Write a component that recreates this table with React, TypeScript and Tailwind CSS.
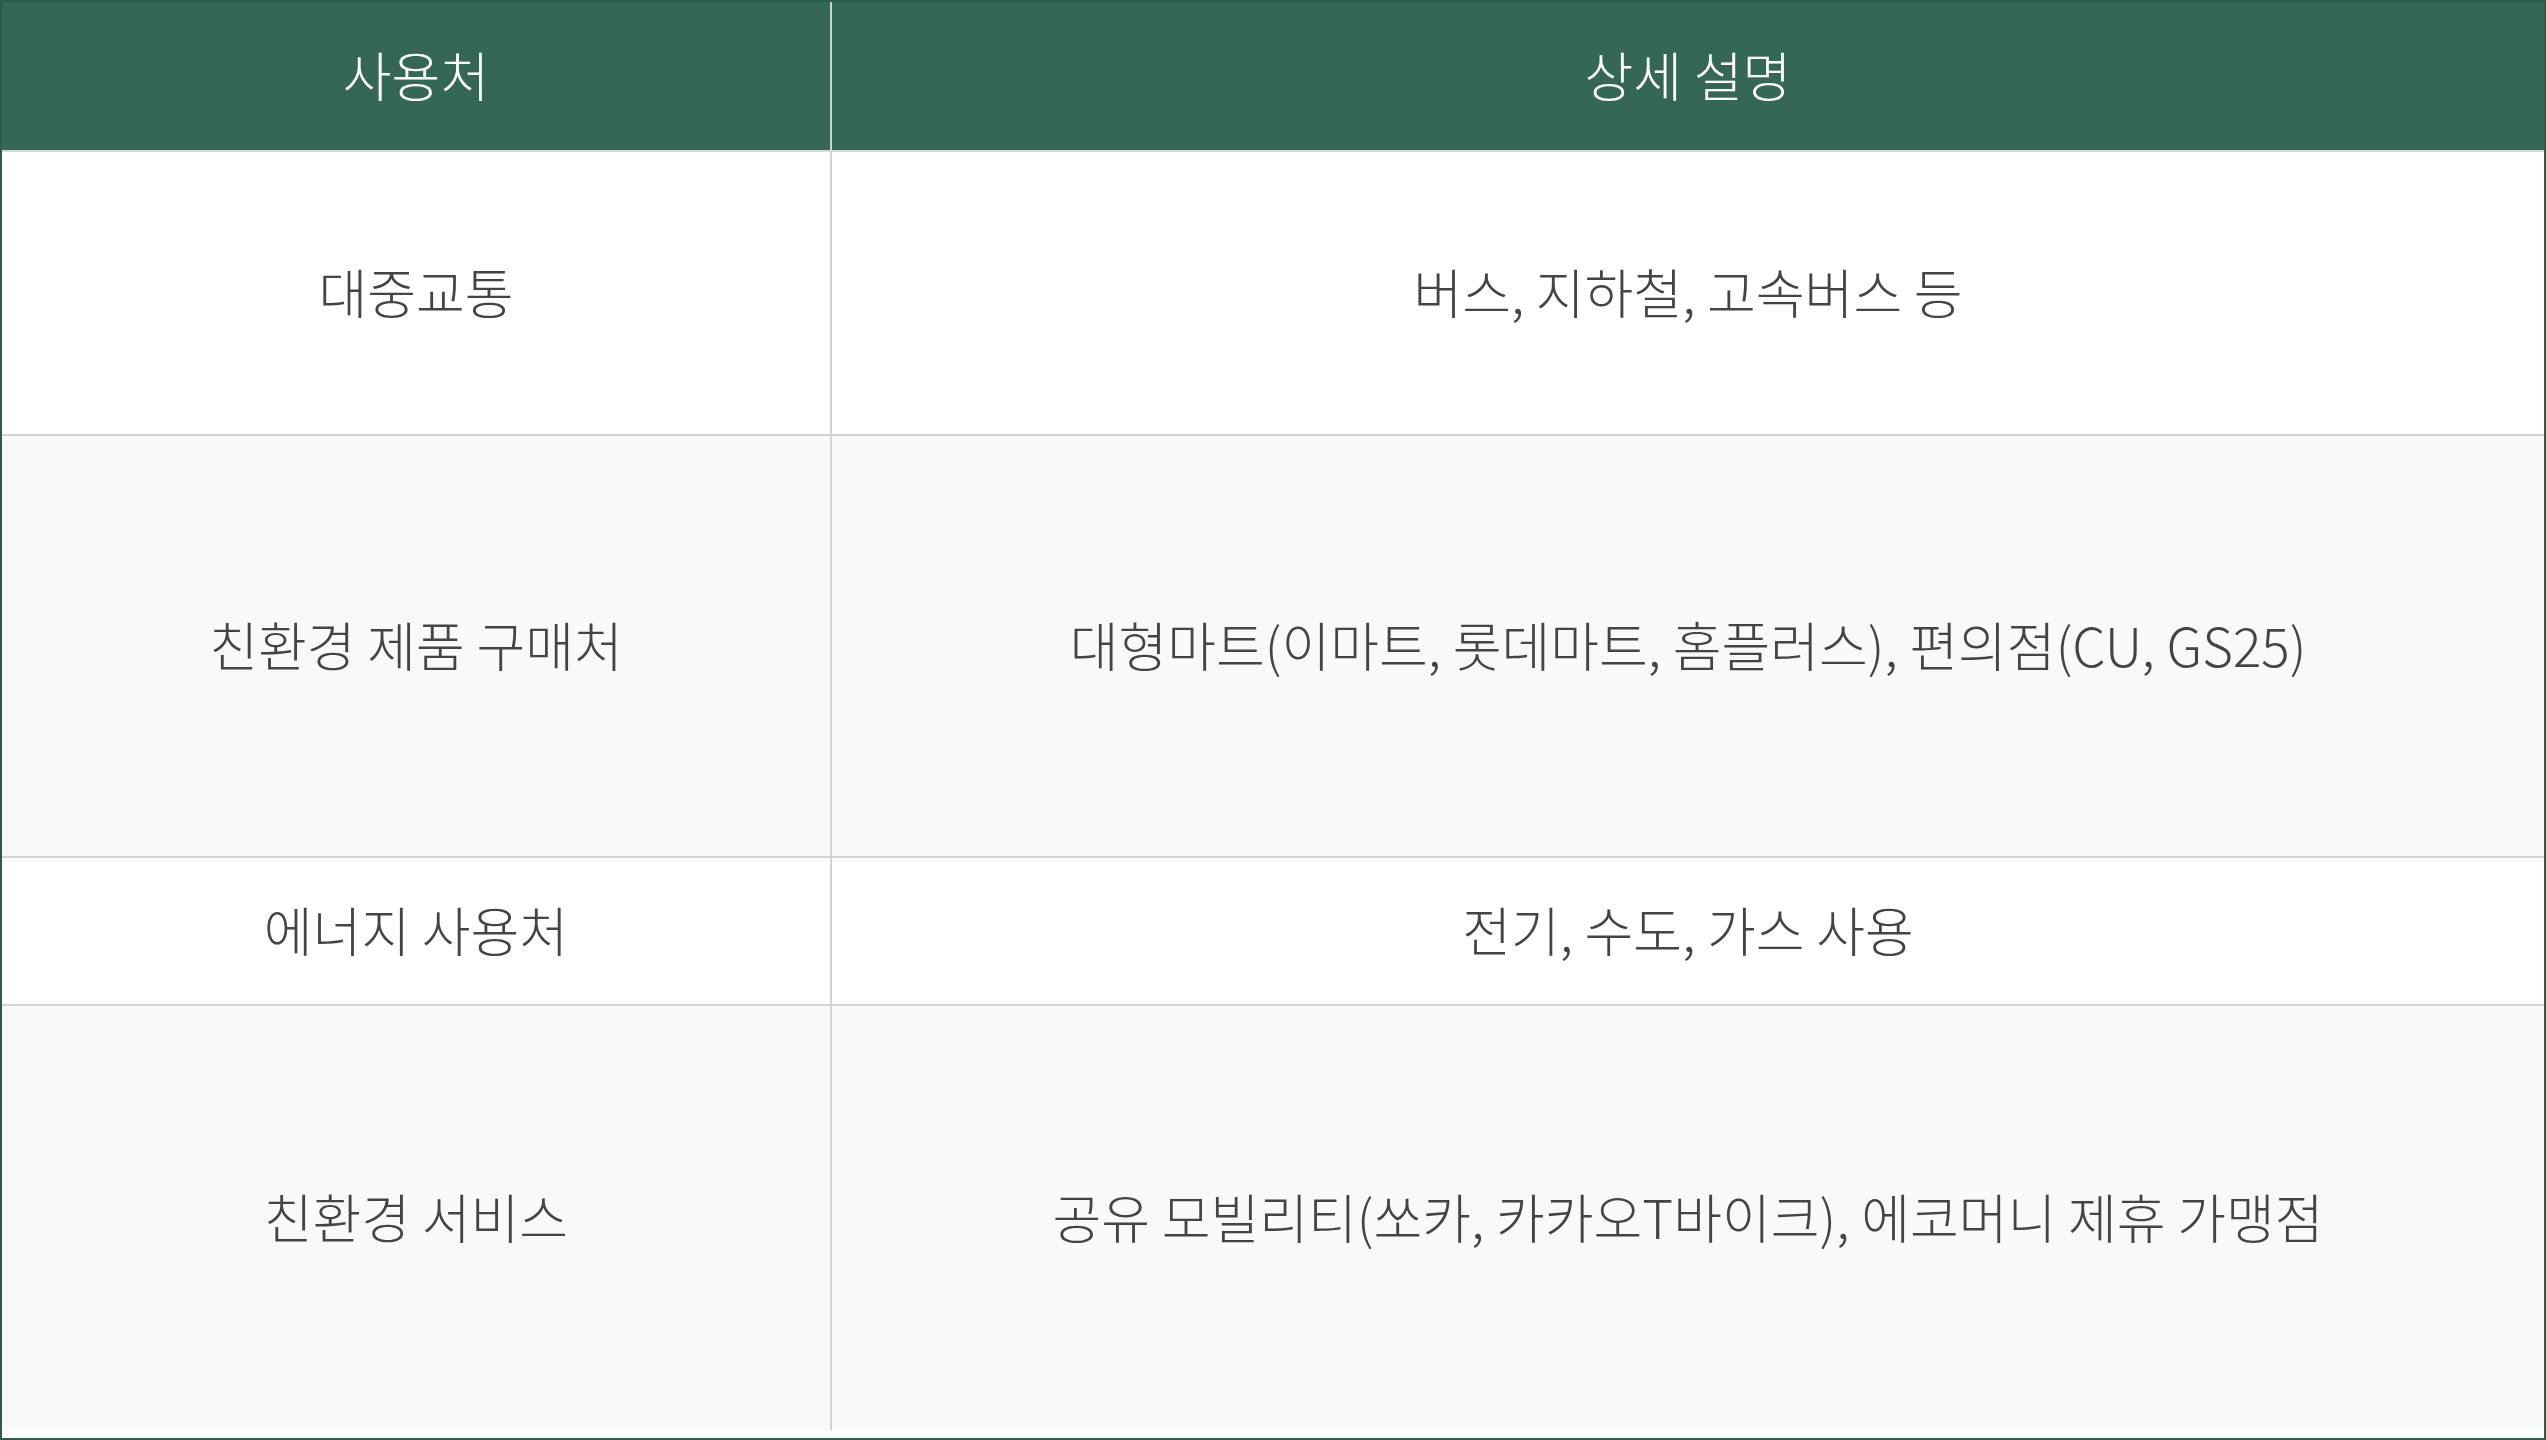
import React from "react";

const rows = [
  { a: "대중교통", b: "버스, 지하철, 고속버스 등", h: "h-[284px]", bg: "bg-white" },
  { a: "친환경 제품 구매처", b: "대형마트(이마트, 롯데마트, 홈플러스), 편의점(CU, GS25)", h: "h-[422px]", bg: "bg-[#f8f9fa]" },
  { a: "에너지 사용처", b: "전기, 수도, 가스 사용", h: "h-[148px]", bg: "bg-white" },
  { a: "친환경 서비스", b: "공유 모빌리티(쏘카, 카카오T바이크), 에코머니 제휴 가맹점", h: "h-[424px]", bg: "bg-[#f8f9fa]" },
];

export default function App() {
  return (
    <div
      className="w-[2546px] h-[1440px] border-2 border-[#2f5b49] flex flex-col bg-white text-[53px] font-light leading-none"
      style={{ fontFamily: '"Noto Sans CJK KR", "Noto Sans", sans-serif' }}
    >
      <div className="flex h-[150px] bg-[#356854] text-white border-b-2 border-[#d4d8d6]">
        <div className="w-[830px] flex items-center justify-center pb-[4px] border-r-2 border-[#c9d3cf]">사용처</div>
        <div className="flex-1 flex items-center justify-center pb-[4px]">상세 설명</div>
      </div>
      {rows.map((r, i) => (
        <div
          key={i}
          className={`flex ${r.h} ${r.bg} text-[#444444] ${i < rows.length - 1 ? "border-b-2 border-[#d3d3d3]" : ""}`}
        >
          <div className="w-[830px] flex items-center justify-center pb-[3px] border-r-2 border-[#d3d3d3]">{r.a}</div>
          <div className="flex-1 flex items-center justify-center pb-[3px]">{r.b}</div>
        </div>
      ))}
    </div>
  );
}
